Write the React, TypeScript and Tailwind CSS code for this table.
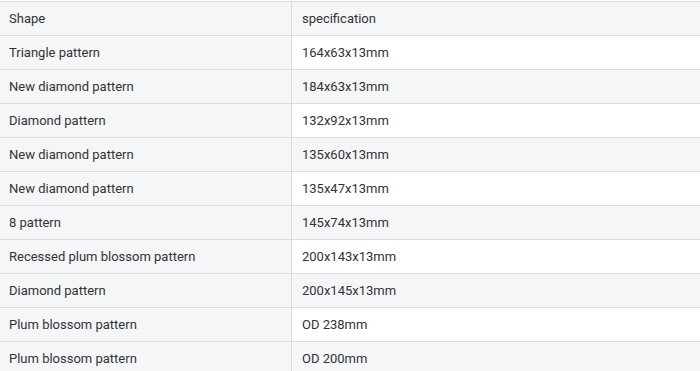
const rows = [
  ['Triangle pattern', '164x63x13mm'],
  ['New diamond pattern', '184x63x13mm'],
  ['Diamond pattern', '132x92x13mm'],
  ['New diamond pattern', '135x60x13mm'],
  ['New diamond pattern', '135x47x13mm'],
  ['8 pattern', '145x74x13mm'],
  ['Recessed plum blossom pattern', '200x143x13mm'],
  ['Diamond pattern', '200x145x13mm'],
  ['Plum blossom pattern', 'OD 238mm'],
  ['Plum blossom pattern', 'OD 200mm'],
];

export default function App() {
  return (
    <div className="w-[700px] h-[371px] overflow-hidden bg-white pt-px font-['Roboto',sans-serif] text-[13px] text-[#333]">
      <div className="flex flex-col border-b border-[#dcdcdc]">
        {/* header */}
        <div className="flex h-[34px] border-t border-[#dcdcdc] bg-[#f5f6f8]">
          <div className="w-[292px] flex items-center pl-[9px] border-r border-[#dcdcdc]">Shape</div>
          <div className="flex-1 flex items-center pl-[10px]">specification</div>
        </div>
        {rows.map(([shape, spec], i) => (
          <div key={i} className="flex h-[34px] border-t border-[#dcdcdc]">
            <div className="w-[292px] flex items-center pl-[9px] bg-[#f5f6f8] border-r border-[#dcdcdc]">{shape}</div>
            <div className={`flex-1 flex items-center pl-[10px] ${i % 2 === 0 ? 'bg-white' : 'bg-[#f5f6f8]'}`}>{spec}</div>
          </div>
        ))}
      </div>
    </div>
  );
}
